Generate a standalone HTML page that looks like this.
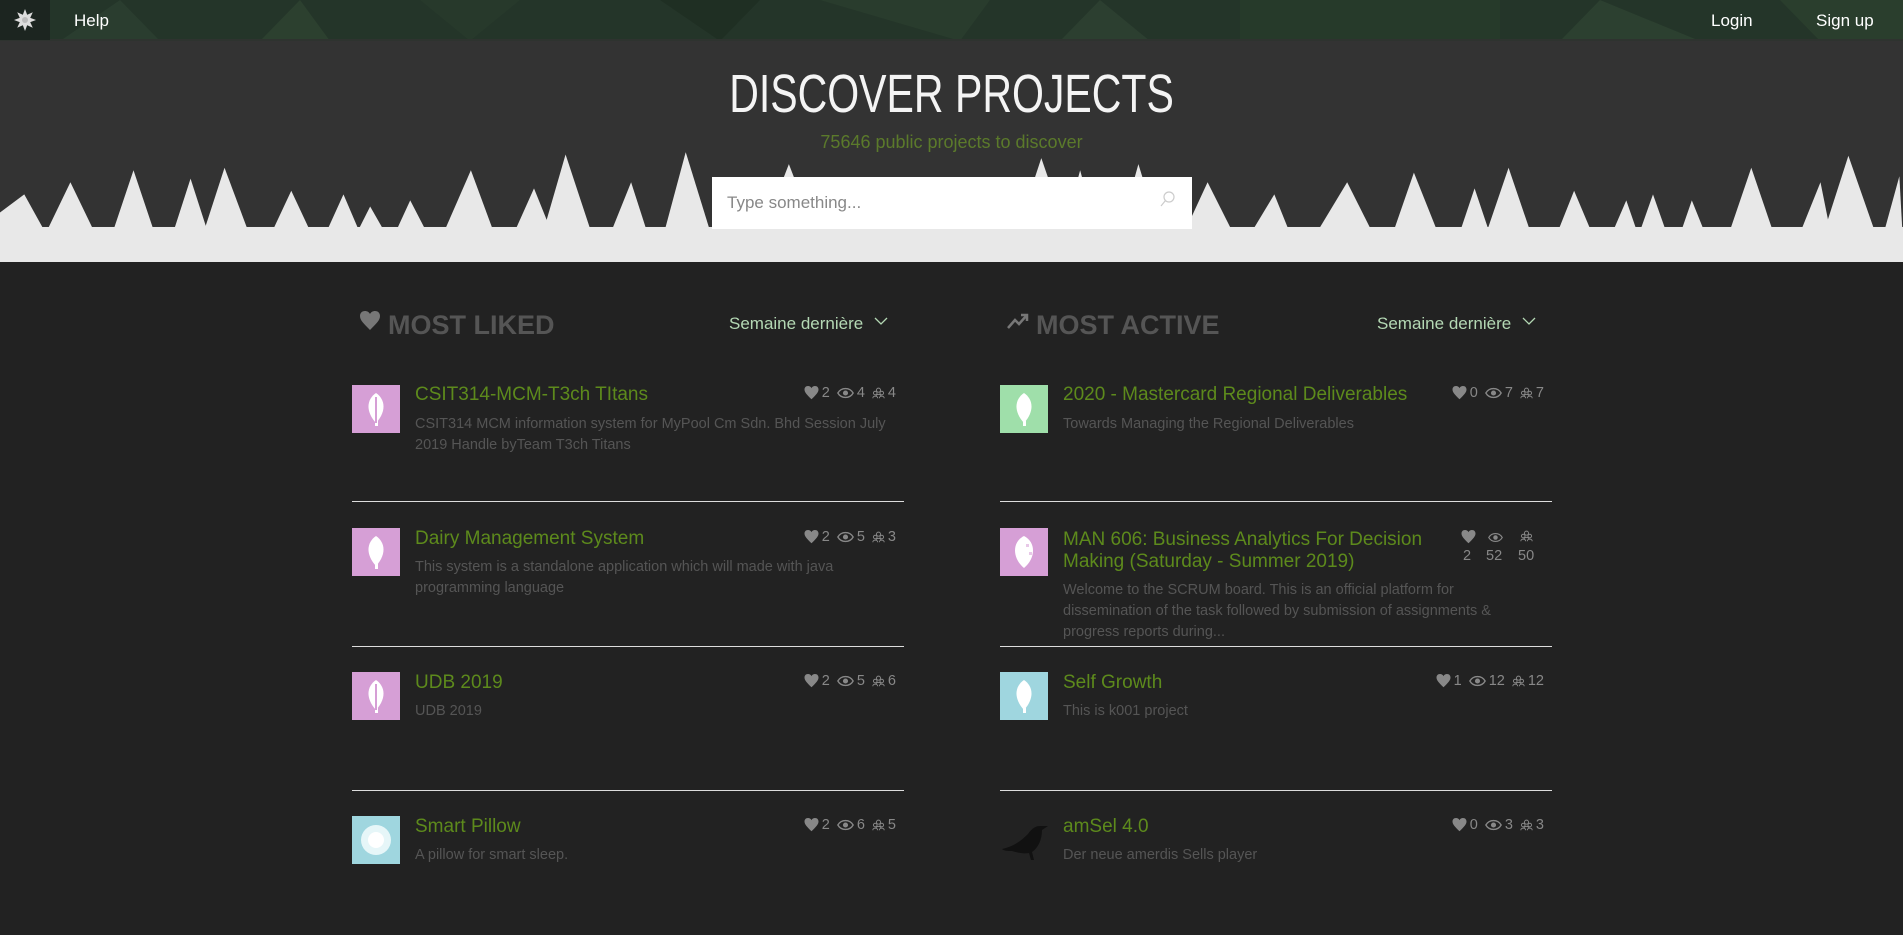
<!DOCTYPE html>
<html><head><meta charset="utf-8"><style>
*{margin:0;padding:0;box-sizing:border-box}
body{width:1903px;height:935px;overflow:hidden;background:#222;font-family:"Liberation Sans",sans-serif;position:relative}
.a{position:absolute}
.nav{left:0;top:0;width:1903px;height:41px;background:#243529;overflow:hidden}
.nt{color:#fff;font-size:17px;top:11px}
.hero{left:0;top:41px;width:1903px;height:221px;background:#333;overflow:hidden}
.ttl{color:#f4f4f4;font-size:54px;left:0;width:1903px;text-align:center;white-space:nowrap}
.ttl span{display:inline-block;transform:scaleX(0.76)}
.sub{width:1903px;text-align:center;color:#5b7a2b;font-size:18px}
.search{left:712px;top:177px;width:480px;height:52px;background:#fff}
.search span{position:absolute;left:15px;top:16px;color:#888;font-size:17px}
.h2{color:#555;font-size:27px;font-weight:bold;top:310px}
.sem{color:#b4d8b4;font-size:17px;top:314px}
.av{width:48px;height:48px}
.t{color:#5d8a1c;font-size:19px;line-height:24px;white-space:nowrap}
.d{color:#555;font-size:14.5px;line-height:21px}
.st{color:#888;font-size:14.5px;display:flex;align-items:center;gap:3px;white-space:nowrap}
.st svg{fill:#888}
.sep{height:1px;background:#ddd;width:552px}
</style></head><body>
<div class="a nav">
<svg width="1903" height="41" style="position:absolute;left:0;top:0">
<polygon points="120,0 160,41 60,41" fill="#2a3d2f"/><polygon points="300,0 330,41 260,41" fill="#2c402f"/>
<polygon points="420,0 520,0 470,41" fill="#27392b"/><polygon points="660,0 760,0 720,41" fill="#1f2f23"/>
<polygon points="820,0 990,0 960,41" fill="#293c2d"/><polygon points="1100,0 1150,41 1060,41" fill="#2c3f30"/>
<polygon points="1240,0 1500,0 1500,41 1240,41" fill="#263a2a"/><polygon points="1600,0 1700,41 1560,41" fill="#2c4030"/>
<polygon points="1780,0 1903,0 1903,41 1820,41" fill="#2a3e2d"/>
<rect y="39" width="1903" height="2" fill="#2e332f"/>
</svg>
<div class="a" style="left:0;top:0;width:50px;height:40px;background:#1c2520"></div>
<svg class="a" style="left:13px;top:8px" width="24" height="24" viewBox="-12 -12 24 24"><g fill="#ddd"><polygon points="0,-11 3,-3 11,0 3,3 0,11 -3,3 -11,0 -3,-3"/><polygon points="0,-11 3,-3 11,0 3,3 0,11 -3,3 -11,0 -3,-3" transform="rotate(45)"/></g><circle r="3" fill="#bbb"/></svg>
<div class="a nt" style="left:74px">Help</div>
<div class="a nt" style="left:1711px">Login</div>
<div class="a nt" style="left:1816px">Sign up</div>
</div>
<div class="a hero">
<svg width="1903" height="221" viewBox="0 33 1568 183" preserveAspectRatio="none" style="position:absolute;left:0;top:0">
<g fill="#e8e8e8">
<polygon points="0,175 20,160 42,200 0,200"/>
<polygon points="34,200 58,150 82,200"/><polygon points="90,200 110,140 130,200"/>
<polygon points="140,200 157,147 174,200"/><polygon points="165,200 185,138 208,200"/>
<polygon points="220,200 240,157 260,200"/><polygon points="265,200 283,160 300,200"/>
<polygon points="290,200 305,170 322,200"/><polygon points="322,200 338,165 356,200"/>
<polygon points="362,200 388,140 410,200"/><polygon points="420,200 440,155 458,200"/>
<polygon points="445,200 466,127 490,200"/><polygon points="500,200 520,150 536,200"/>
<polygon points="545,200 565,125 588,200"/><polygon points="625,200 650,135 675,200"/>
<polygon points="835,200 858,130 882,200"/><polygon points="874,200 890,140 906,200"/>
<polygon points="920,200 938,135 958,200"/><polygon points="972,200 995,150 1020,200"/>
<polygon points="1026,200 1050,160 1066,200"/><polygon points="1080,200 1110,150 1135,200"/>
<polygon points="1145,200 1165,142 1188,200"/><polygon points="1200,200 1215,155 1230,200"/>
<polygon points="1222,200 1243,138 1264,200"/><polygon points="1280,200 1297,157 1315,200"/>
<polygon points="1325,200 1340,165 1352,200"/><polygon points="1348,200 1362,160 1376,200"/>
<polygon points="1382,200 1394,165 1408,200"/><polygon points="1422,200 1443,138 1464,200"/>
<polygon points="1480,200 1500,150 1510,200"/><polygon points="1500,200 1523,128 1548,200"/>
<polygon points="1550,200 1565,145 1568,200"/>
<rect x="0" y="187" width="1568" height="29"/>
</g></svg>
<div class="a ttl" style="top:22px"><span>DISCOVER PROJECTS</span></div>
<div class="a sub" style="top:91px">75646 public projects to discover</div>
</div>
<div class="a search"><span>Type something...</span>
<svg class="a" style="left:448px;top:14px" width="16" height="18" viewBox="0 0 16 18"><circle cx="9" cy="6" r="5" fill="none" stroke="#ccc" stroke-width="1.2"/><line x1="5.5" y1="9.5" x2="1" y2="15" stroke="#ccc" stroke-width="1.2"/></svg>
</div>

<svg class="a" style="left:360px;top:311px" width="20" height="20" viewBox="0 0 20 20"><path d="M10 19 C3 12 0 9 0 5 C0 2 2 0 5 0 C7 0 9 1 10 3 C11 1 13 0 15 0 C18 0 20 2 20 5 C20 9 17 12 10 19Z" fill="#777"/></svg>
<div class="a h2" style="left:388px">MOST LIKED</div>
<div class="a sem" style="left:729px">Semaine dernière</div>
<svg class="a" style="left:874px;top:317px" width="14" height="9"><polyline points="1,1 7,7 13,1" fill="none" stroke="#b4d8b4" stroke-width="1.3"/></svg>

<svg class="a" style="left:1007px;top:313px" width="22" height="16"><polyline points="1,15 8,7 12,11 20,2" fill="none" stroke="#777" stroke-width="2.5"/><polyline points="14,2 20,2 20,8" fill="none" stroke="#777" stroke-width="2.5"/></svg>
<div class="a h2" style="left:1036px">MOST ACTIVE</div>
<div class="a sem" style="left:1377px">Semaine dernière</div>
<svg class="a" style="left:1522px;top:317px" width="14" height="9"><polyline points="1,1 7,7 13,1" fill="none" stroke="#b4d8b4" stroke-width="1.3"/></svg>

<svg width="0" height="0" style="position:absolute"><defs>
<symbol id="hr" viewBox="0 0 20 20"><path d="M10 19 C3 12 0 9 0 5 C0 2 2 0 5 0 C7 0 9 1 10 3 C11 1 13 0 15 0 C18 0 20 2 20 5 C20 9 17 12 10 19Z"/></symbol>
<symbol id="ey" viewBox="0 0 20 14"><path d="M1 7 C5 0 15 0 19 7 C15 14 5 14 1 7Z" fill="none" stroke="#888" stroke-width="1.6"/><circle cx="10" cy="7" r="3"/></symbol>
<symbol id="pp" viewBox="0 0 16 14"><g fill="none" stroke="#888" stroke-width="1.2"><circle cx="8" cy="3.5" r="2.5"/><circle cx="4" cy="7" r="2.2"/><circle cx="12" cy="7" r="2.2"/><path d="M1 13.5 C1 10 7 10 7 13.5 M9 13.5 C9 10 15 10 15 13.5 M5 11 C5 8 11 8 11 11"/></g></symbol>
<symbol id="leaf" viewBox="0 0 48 48"><path d="M24 8 C33 14 35 26 24 38 C13 26 15 14 24 8Z" fill="#fff"/><rect x="23" y="36" width="3" height="5" fill="#fff"/></symbol>
</defs></svg>

<div class="a av" style="left:352px;top:385px;background:#d69fd6"><svg width="48" height="48"><use href="#leaf"/><rect x="23" y="12" width="2" height="26" fill="#d69fd6"/></svg></div>
<div class="a t" style="left:415px;top:383px">CSIT314-MCM-T3ch TItans</div>
<div class="a d" style="left:415px;top:414px;width:480px">CSIT314 MCM information system for MyPool Cm Sdn. Bhd Session July 2019 Handle byTeam T3ch Titans</div>
<div class="a st" style="right:1007px;top:385px"><svg width="15" height="14"><use href="#hr"/></svg>2&nbsp;<svg width="17" height="12"><use href="#ey"/></svg>4&nbsp;<svg width="13" height="12"><use href="#pp"/></svg>4</div>
<div class="a sep" style="left:352px;top:501px"></div>

<div class="a av" style="left:352px;top:528px;background:#d69fd6"><svg width="48" height="48"><use href="#leaf"/></svg></div>
<div class="a t" style="left:415px;top:527px">Dairy Management System</div>
<div class="a d" style="left:415px;top:557px;width:480px">This system is a standalone application which will made with java programming language</div>
<div class="a st" style="right:1007px;top:529px"><svg width="15" height="14"><use href="#hr"/></svg>2&nbsp;<svg width="17" height="12"><use href="#ey"/></svg>5&nbsp;<svg width="13" height="12"><use href="#pp"/></svg>3</div>
<div class="a sep" style="left:352px;top:646px"></div>

<div class="a av" style="left:352px;top:672px;background:#d69fd6"><svg width="48" height="48"><use href="#leaf"/><rect x="23" y="12" width="2" height="26" fill="#d69fd6"/></svg></div>
<div class="a t" style="left:415px;top:671px">UDB 2019</div>
<div class="a d" style="left:415px;top:701px">UDB 2019</div>
<div class="a st" style="right:1007px;top:673px"><svg width="15" height="14"><use href="#hr"/></svg>2&nbsp;<svg width="17" height="12"><use href="#ey"/></svg>5&nbsp;<svg width="13" height="12"><use href="#pp"/></svg>6</div>
<div class="a sep" style="left:352px;top:790px"></div>

<div class="a av" style="left:352px;top:816px;background:#9fd6df"><svg width="48" height="48"><circle cx="24" cy="24" r="15" fill="#e6f6f8"/><circle cx="24" cy="24" r="8" fill="#fff"/></svg></div>
<div class="a t" style="left:415px;top:815px">Smart Pillow</div>
<div class="a d" style="left:415px;top:845px">A pillow for smart sleep.</div>
<div class="a st" style="right:1007px;top:817px"><svg width="15" height="14"><use href="#hr"/></svg>2&nbsp;<svg width="17" height="12"><use href="#ey"/></svg>6&nbsp;<svg width="13" height="12"><use href="#pp"/></svg>5</div>

<div class="a av" style="left:1000px;top:385px;background:#9fdfaa"><svg width="48" height="48"><use href="#leaf"/></svg></div>
<div class="a t" style="left:1063px;top:383px">2020 - Mastercard Regional Deliverables</div>
<div class="a d" style="left:1063px;top:414px">Towards Managing the Regional Deliverables</div>
<div class="a st" style="right:359px;top:385px"><svg width="15" height="14"><use href="#hr"/></svg>0&nbsp;<svg width="17" height="12"><use href="#ey"/></svg>7&nbsp;<svg width="13" height="12"><use href="#pp"/></svg>7</div>
<div class="a sep" style="left:1000px;top:501px"></div>

<div class="a av" style="left:1000px;top:528px;background:#d69fd6"><svg width="48" height="48"><path d="M24 8 C36 14 36 30 24 40 C12 30 12 14 24 8Z" fill="#fff"/><rect x="26" y="16" width="3" height="3" fill="#e8c8e8"/><rect x="29" y="24" width="3" height="3" fill="#e8c8e8"/></svg></div>
<div class="a t" style="left:1063px;top:529px;line-height:22px;width:380px;white-space:normal">MAN 606: Business Analytics For Decision Making (Saturday - Summer 2019)</div>
<div class="a d" style="left:1063px;top:580px;width:470px">Welcome to the SCRUM board. This is an official platform for dissemination of the task followed by submission of assignments &amp; progress reports during...</div>
<svg class="a" style="left:1461px;top:530px" width="15" height="14" fill="#888"><use href="#hr"/></svg>
<svg class="a" style="left:1488px;top:532px" width="15" height="11" fill="#888"><use href="#ey"/></svg>
<svg class="a" style="left:1520px;top:530px" width="13" height="12"><use href="#pp"/></svg>
<div class="a st" style="left:1463px;top:548px">2</div>
<div class="a st" style="left:1486px;top:548px">52</div>
<div class="a st" style="left:1518px;top:548px">50</div>
<div class="a sep" style="left:1000px;top:646px"></div>

<div class="a av" style="left:1000px;top:672px;background:#9fd6df"><svg width="48" height="48"><use href="#leaf"/></svg></div>
<div class="a t" style="left:1063px;top:671px">Self Growth</div>
<div class="a d" style="left:1063px;top:701px">This is k001 project</div>
<div class="a st" style="right:359px;top:673px"><svg width="15" height="14"><use href="#hr"/></svg>1&nbsp;<svg width="17" height="12"><use href="#ey"/></svg>12&nbsp;<svg width="13" height="12"><use href="#pp"/></svg>12</div>
<div class="a sep" style="left:1000px;top:790px"></div>

<svg class="a" style="left:1000px;top:820px" width="50" height="42" viewBox="0 0 50 42"><path d="M2 29 C12 27 20 22 28 14 C32 8 36 6 40 6 L48 6 L42 10 C42 20 38 28 32 32 L34 40 L31 40 L29 33 C24 34 18 33 12 31 C8 31 4 31 2 29Z" fill="#111"/></svg>
<div class="a t" style="left:1063px;top:815px">amSel 4.0</div>
<div class="a d" style="left:1063px;top:845px">Der neue amerdis Sells player</div>
<div class="a st" style="right:359px;top:817px"><svg width="15" height="14"><use href="#hr"/></svg>0&nbsp;<svg width="17" height="12"><use href="#ey"/></svg>3&nbsp;<svg width="13" height="12"><use href="#pp"/></svg>3</div>
</body></html>
